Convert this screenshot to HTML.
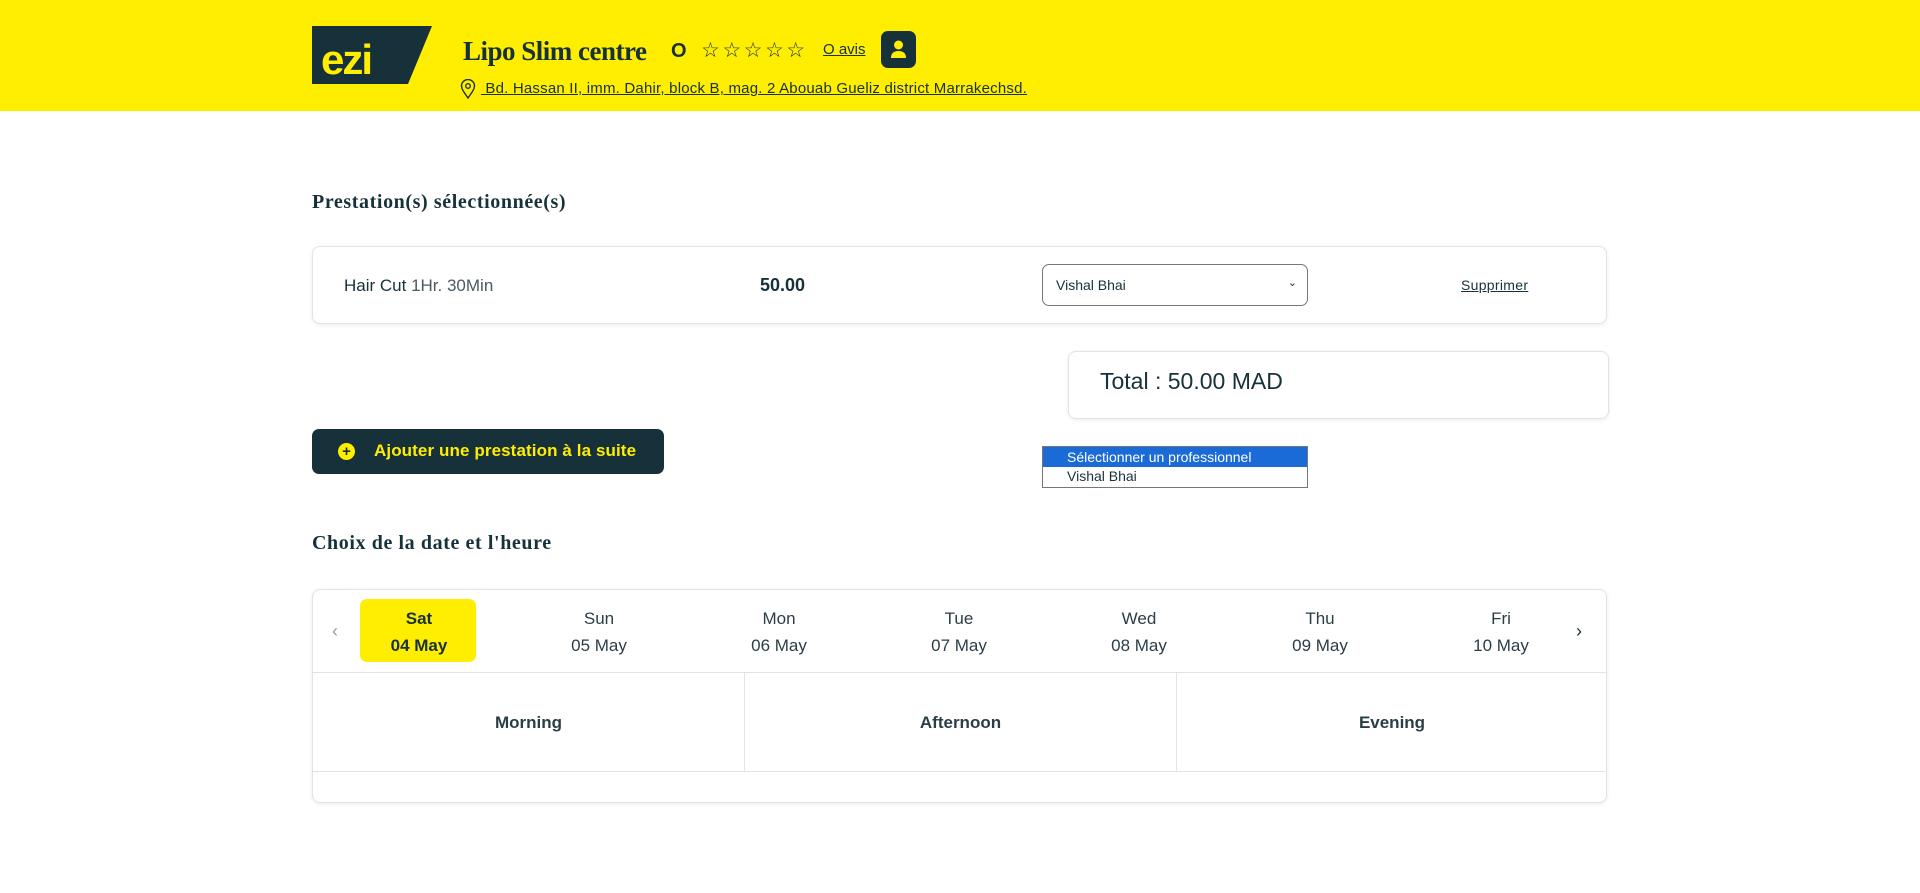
<!DOCTYPE html>
<html><head><meta charset="utf-8"><style>
*{box-sizing:border-box;margin:0;padding:0}
body{width:1920px;height:893px;background:#fff;font-family:"Liberation Sans",sans-serif;color:#17313b;position:relative;overflow:hidden}
.abs{position:absolute}
.hdr{left:0;top:0;width:1920px;height:111px;background:#ffee00}
.serif{font-family:"Liberation Serif",serif;font-weight:bold;letter-spacing:-0.5px}
.card{background:#fff;border:1px solid #e3e3e3;border-radius:8px;box-shadow:0 1px 4px rgba(0,0,0,.08)}
a{color:#17313b}
.day{position:absolute;top:605px;width:140px;text-align:center;font-size:17px;line-height:27px;color:#2a3e46}
</style></head><body>
<div class="abs hdr"></div>
<svg class="abs" style="left:312px;top:26px" width="120" height="58"><polygon points="0,0 120,0 96,58 0,58" fill="#17313b"/><text x="9" y="48" font-family="Liberation Sans" font-weight="bold" font-size="42" fill="#ffee00" letter-spacing="-2">ezi</text></svg>
<div class="abs serif" style="left:463px;top:36px;font-size:27px">Lipo Slim centre</div>
<div class="abs" style="left:671px;top:40px;font-size:20px;font-weight:bold">O</div>
<div class="abs" style="left:701px;top:38px;font-size:21px;letter-spacing:2.5px">☆☆☆☆☆</div>
<div class="abs" style="left:823px;top:41px;font-size:15px;text-decoration:underline">O avis</div>
<div class="abs" style="left:881px;top:31px;width:35px;height:37px;background:#17313b;border-radius:7px"><svg width="35" height="37"><circle cx="17.5" cy="14" r="4.5" fill="#ffee00"/><path d="M10 27 q0-7 7.5-7 q7.5 0 7.5 7z" fill="#ffee00"/></svg></div>
<svg class="abs" style="left:460px;top:79px" width="16" height="20" viewBox="0 0 16 20"><path d="M8 19 C3 12 1.5 9.5 1.5 7 a6.5 6.5 0 0 1 13 0 c0 2.5-1.5 5-6.5 12z" fill="none" stroke="#17313b" stroke-width="1.4"/><circle cx="8" cy="7" r="2.3" fill="none" stroke="#17313b" stroke-width="1.3"/></svg>
<div class="abs" style="left:481px;top:80px;font-size:15px;letter-spacing:0.2px;text-decoration:underline">&nbsp;Bd. Hassan II, imm. Dahir, block B, mag. 2 Abouab Gueliz district Marrakechsd.</div>

<div class="abs serif" style="left:312px;top:191px;font-size:20px;letter-spacing:0.6px">Prestation(s) sélectionnée(s)</div>
<div class="abs card" style="left:312px;top:246px;width:1295px;height:78px"></div>
<div class="abs" style="left:344px;top:276px;font-size:17px">Hair Cut <span style="color:#4a5a60">1Hr. 30Min</span></div>
<div class="abs" style="left:760px;top:275px;font-size:18px;font-weight:bold">50.00</div>
<div class="abs" style="left:1042px;top:264px;width:266px;height:42px;border:1px solid #777;border-radius:7px;font-size:14px;padding:12px 0 0 13px">Vishal Bhai<span style="position:absolute;right:10px;top:11px;font-size:11px">⌄</span></div>
<div class="abs" style="left:1461px;top:277px;font-size:14px;letter-spacing:0.3px;text-decoration:underline">Supprimer</div>

<div class="abs card" style="left:1068px;top:351px;width:541px;height:68px"></div>
<div class="abs" style="left:1100px;top:368px;font-size:23px">Total : 50.00 MAD</div>

<div class="abs" style="left:312px;top:429px;width:352px;height:45px;background:#17313b;border-radius:7px"></div>
<div class="abs" style="left:338px;top:443px;width:17px;height:17px;border-radius:50%;background:#ffee00;color:#17313b;font-size:15px;font-weight:bold;text-align:center;line-height:17px">+</div>
<div class="abs" style="left:374px;top:441px;font-size:17px;font-weight:bold;color:#ffee00;letter-spacing:0.1px">Ajouter une prestation à la suite</div>

<div class="abs" style="left:1042px;top:446px;width:266px;height:42px;border:1px solid #777;background:#fff;font-size:14px">
<div style="background:#1a6bd6;color:#fff;height:20px;padding:2px 0 0 24px">Sélectionner un professionnel</div>
<div style="padding:1px 0 0 24px">Vishal Bhai</div></div>

<div class="abs serif" style="left:312px;top:532px;font-size:20px;letter-spacing:0.6px">Choix de la date et l'heure</div>
<div class="abs card" style="left:312px;top:589px;width:1295px;height:214px"></div>
<div class="abs" style="left:313px;top:672px;width:1293px;border-top:1px solid #e3e3e3"></div>
<div class="abs" style="left:313px;top:771px;width:1293px;border-top:1px solid #e3e3e3"></div>
<div class="abs" style="left:744px;top:673px;height:98px;border-left:1px solid #e3e3e3"></div>
<div class="abs" style="left:1176px;top:673px;height:98px;border-left:1px solid #e3e3e3"></div>
<div class="abs" style="left:360px;top:599px;width:116px;height:63px;background:#ffee00;border-radius:7px"></div>
<div class="abs" style="left:332px;top:621px;font-size:18px;color:#999">‹</div>
<div class="abs" style="left:1576px;top:621px;font-size:18px">›</div>
<div class="day" style="left:349px;font-weight:bold;color:#17313b">Sat<br>04 May</div>
<div class="day" style="left:529px">Sun<br>05 May</div>
<div class="day" style="left:709px">Mon<br>06 May</div>
<div class="day" style="left:889px">Tue<br>07 May</div>
<div class="day" style="left:1069px">Wed<br>08 May</div>
<div class="day" style="left:1250px">Thu<br>09 May</div>
<div class="day" style="left:1431px">Fri<br>10 May</div>
<div class="abs" style="left:313px;top:713px;width:431px;text-align:center;font-size:17px;font-weight:bold;color:#2a3e46">Morning</div>
<div class="abs" style="left:745px;top:713px;width:431px;text-align:center;font-size:17px;font-weight:bold;color:#2a3e46">Afternoon</div>
<div class="abs" style="left:1177px;top:713px;width:430px;text-align:center;font-size:17px;font-weight:bold;color:#2a3e46">Evening</div>
</body></html>
